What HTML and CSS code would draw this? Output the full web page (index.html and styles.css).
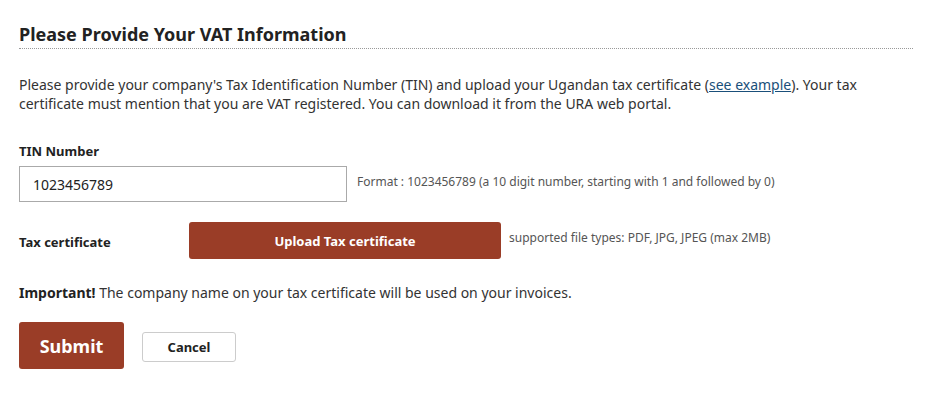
FILE: index.html
```html
<!DOCTYPE html>
<html>
<head>
<meta charset="utf-8">
<link rel="stylesheet" href="styles.css">
</head>
<body>
<div class="page">
  <h2 class="title">Please Provide Your VAT Information</h2>
  <p class="intro">Please provide your company's Tax Identification Number (TIN) and upload your Ugandan tax certificate (<a href="#">see example</a>). Your tax certificate must mention that you are VAT registered. You can download it from the URA web portal.</p>
  <div class="field">
    <label class="label">TIN Number</label>
    <div class="row">
      <input class="input" type="text" value="1023456789">
      <span class="hint">Format : 1023456789 (a 10 digit number, starting with 1 and followed by 0)</span>
    </div>
  </div>
  <div class="row cert">
    <span class="label cert-label">Tax certificate</span>
    <button class="upload">Upload Tax certificate</button>
    <span class="hint">supported file types: PDF, JPG, JPEG (max 2MB)</span>
  </div>
  <p class="important"><b>Important!</b> The company name on your tax certificate will be used on your invoices.</p>
  <div class="actions">
    <button class="submit">Submit</button>
    <button class="cancel">Cancel</button>
  </div>
</div>
</body>
</html>
```
FILE: styles.css
```css
* { box-sizing: border-box; }
body {
  margin: 0;
  background: #fff;
  font-family: "Noto Sans", "Open Sans", sans-serif;
  color: #222;
}
.page {
  padding: 20px 23px 0 19px;
}
.title {
  margin: 0;
  font-size: 18px;
  font-weight: 700;
  line-height: 28px;
  color: #222;
  padding-bottom: 0;
  border-bottom: 1px dotted #999;
  height: 29px;
}
.intro {
  margin: 26px 0 0;
  font-size: 14px;
  line-height: 19px;
  color: #333;
}
.intro a { color: #1a4f7a; text-decoration: underline; }
.field { margin-top: 29px; }
.label {
  display: block;
  font-size: 13px;
  font-weight: 700;
  line-height: 18px;
  color: #222;
}
.row {
  display: flex;
  align-items: center;
}
.field .row { margin-top: 6px; }
.input {
  width: 328px;
  height: 36px;
  border: 1px solid #aaa;
  border-radius: 0;
  padding: 0 13px;
  font-family: inherit;
  font-size: 14px;
  color: #222;
  outline: none;
}
.hint {
  font-size: 12px;
  color: #555;
  margin-left: 10px;
}
.field .hint { margin-top: -5px; }
.cert { margin-top: 20px; }
.cert-label { width: 170px; margin-top: 3px; }
.upload {
  width: 312px;
  height: 37px;
  background: #9a3d27;
  color: #fff;
  border: none;
  border-radius: 3px;
  font-family: inherit;
  font-size: 13px;
  font-weight: 700;
  cursor: pointer;
}
.cert .hint { margin-left: 8px; margin-top: -6px; }
.important {
  margin: 24px 0 0;
  font-size: 14px;
  line-height: 19px;
  color: #333;
}
.important b { color: #222; }
.actions {
  display: flex;
  align-items: center;
  margin-top: 20px;
}
.submit {
  width: 105px;
  height: 47px;
  background: #9a3d27;
  color: #fff;
  border: none;
  border-radius: 3px;
  font-family: inherit;
  font-size: 18px;
  font-weight: 700;
}
.cancel {
  margin-left: 18px;
  width: 94px;
  height: 30px;
  background: #fff;
  border: 1px solid #ccc;
  border-radius: 3px;
  font-family: inherit;
  font-size: 13px;
  font-weight: 700;
  color: #222;
  margin-top: 2px;
}
```
